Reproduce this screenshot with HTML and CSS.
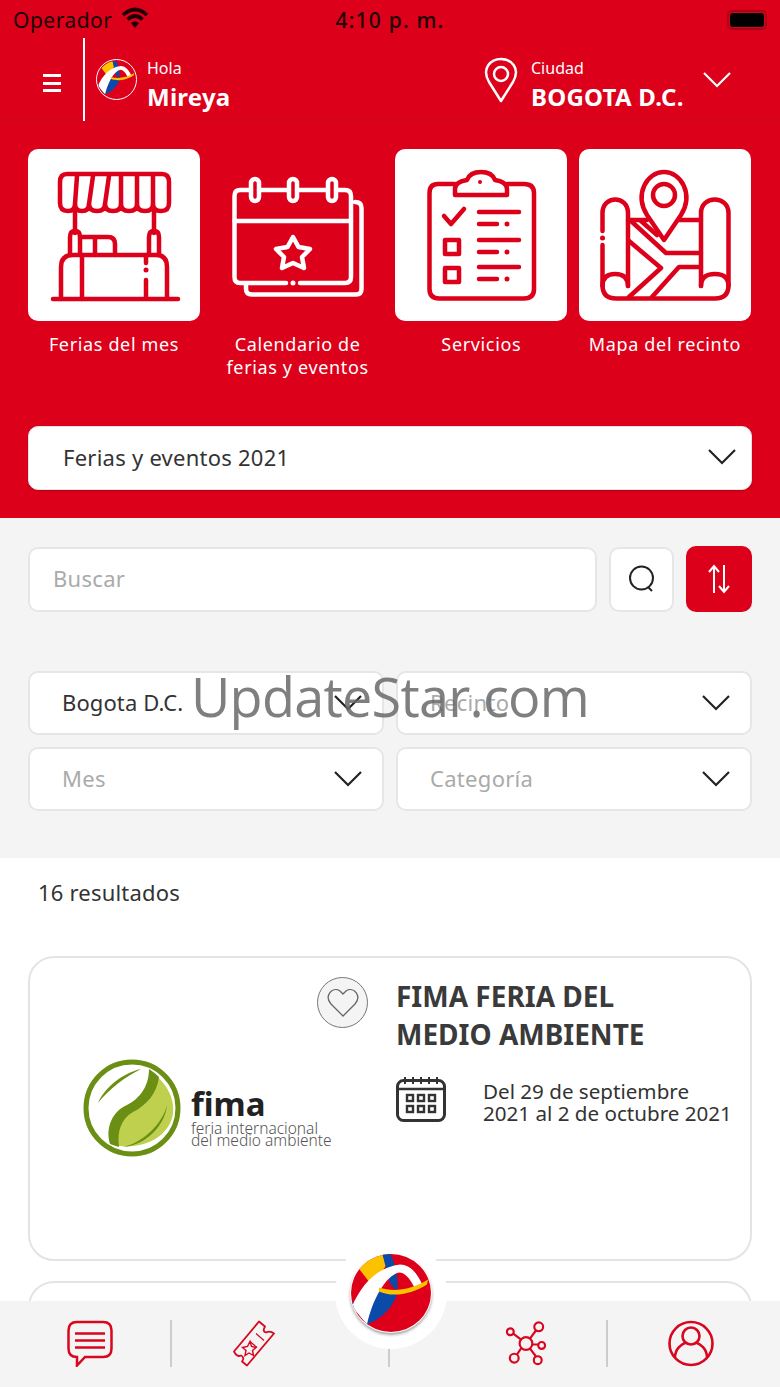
FILE: index.html
```html
<!DOCTYPE html>
<html lang="es">
<head>
    <meta charset="UTF-8">
    <meta name="viewport" content="width=device-width, initial-scale=1.0">
    <title>Ferias y eventos</title>
    <link rel="stylesheet" href="styles.css">
</head>
<body>

<svg class="defs" width="0" height="0">
    <defs>
        <clipPath id="logoClip"><ellipse cx="41" cy="39.500" rx="40" ry="39"/></clipPath>
        <symbol id="logo" viewBox="0 0 82 79">
            <g clip-path="url(#logoClip)">
                <rect width="82" height="79" fill="#de001a"/>
                <path d="M8 14 L32 -2 L36 12 L22 32 Z" fill="#fcc200"/>
                <path d="M32 -1 L40 -1 C45 10 49 25 47 38 L40 30 Z" fill="#0a4aa8"/>
                <path d="M0 50 L30 38 L47 38 C46 50 34 64 17 71 Z" fill="#0a4aa8"/>
                <path d="M2 53 C11 32 26 14 50 11 C60 11 68 20 73 33 L65 35 C60 25 55 19 49 19 C35 22 22 48 17 71 Z" fill="#fff"/>
                <path d="M29 34 C44 39 62 36 78 26 L77 31 C62 41 42 44 29 38 Z" fill="#fcc200"/>
            </g>
        </symbol>
    </defs>
</svg>

<div class="content">
    <section class="red-area">
        <div class="status-bar">
            <div class="status-left">
                <span>Operador</span>
                <svg class="wifi" viewBox="0 0 28 22"><path d="M2 8 Q14 -3 26 8 M6.500 12.500 Q14 5.500 21.500 12.500" fill="none" stroke="#1c0104" stroke-width="3.600"/><path d="M10 16 Q14 12.500 18 16 L14 21 Z" fill="#1c0104"/></svg>
            </div>
            <span class="status-time">4:10 p. m.</span>
            <div class="battery"><div class="battery-fill"></div></div>
        </div>

        <header class="top-bar">
            <div class="burger"><i></i><i></i><i></i></div>
            <div class="user-box">
                <svg class="user-logo"><use href="#logo"/></svg>
                <div class="user-text">
                    <span class="small-label">Hola</span>
                    <strong>Mireya</strong>
                </div>
            </div>
            <div class="city-box">
                <svg class="city-pin" viewBox="0 0 36 46"><path d="M18 44 L6 25 C-2 11 8 2 18 2 C28 2 38 11 30 25 Z" fill="none" stroke="#fff" stroke-width="2.500" stroke-linejoin="round"/><circle cx="18" cy="17" r="7" fill="none" stroke="#fff" stroke-width="2.500"/></svg>
                <div class="user-text">
                    <span class="small-label">Ciudad</span>
                    <strong>BOGOTA D.C.</strong>
                </div>
                <svg class="city-chevron" viewBox="0 0 28 16"><path d="M1 1 L14 14 L27 1" fill="none" stroke="#fff" stroke-width="2.200"/></svg>
            </div>
        </header>

        <div class="tiles">
            <div class="tile">
                <div class="tile-box white">
                    <svg viewBox="0 0 172 172" class="line-red">
                        <path d="M39 25 H134 Q141 25 141 33 V54 Q141 62 133 62 Q125 62 125 55 Q125 62 117 62 Q109 62 109 55 Q109 62 101 62 Q93 62 93 55 Q93 62 85 62 Q77 62 77 55 Q77 62 69 62 Q61 62 61 55 Q61 62 54 62 Q47 62 47 55 Q47 62 40 62 Q32 62 32 54 V33 Q32 25 39 25 Z"/>
                        <path d="M49 27 L47 55 M65 27 L61 55 M81 27 L77 55 M93 27 V55 M109 27 V55 M125 27 L125 55"/>
                        <path d="M47 62 V84 M126 62 V84"/>
                        <path d="M42 106 V88 Q42 82 47 82 Q52 82 52 88 V106 M121 106 V88 Q121 82 126 82 Q131 82 131 88 V106"/>
                        <path d="M52 88 H80 Q87 88 87 95 V106 M67 90 V106"/>
                        <path d="M33 150 V118 Q33 106 45 106 H128 Q139 106 139 118 V150"/>
                        <path d="M54 106 V150 M118 106 V114 M118 131 V148"/>
                        <circle cx="118" cy="121" r="2.500" class="dot"/>
                        <path d="M25 150 H150"/>
                    </svg>
                </div>
                <span class="tile-label">Ferias del mes</span>
            </div>
            <div class="tile">
                <div class="tile-box">
                    <svg viewBox="0 0 172 172" class="line-white">
                        <path d="M34 135 V140 Q34 145.500 40 145.500 H144 Q149.500 145.500 149.500 140 V59 Q149.500 53 143 53"/>
                        <path d="M39 41 H28 Q22.500 41 22.500 47 V128 Q22.500 134 28 134 H74 M88 134 H133 Q139 134 139 128 V47 Q139 41 133 41 H124 M116 41 H85 M77 41 H47"/>
                        <path d="M22.500 72 H139"/>
                        <rect x="39" y="30" width="8" height="22" rx="4"/>
                        <rect x="77" y="30" width="8" height="22" rx="4"/>
                        <rect x="116" y="30" width="8" height="22" rx="4"/>
                        <path d="M81 88 L86.500 98 L98 100 L90 108 L92 119 L81 114 L70 119 L72 108 L64 100 L75.500 98 Z"/>
                        <circle cx="81" cy="134" r="2.500" class="dot"/>
                    </svg>
                </div>
                <span class="tile-label">Calendario de<br>ferias y eventos</span>
            </div>
            <div class="tile">
                <div class="tile-box white">
                    <svg viewBox="0 0 172 172" class="line-red">
                        <path d="M60 35 H43 Q34.500 35 34.500 44 V140 Q34.500 149.500 44 149.500 H129 Q139 149.500 139 140 V44 Q139 35 129 35 H112"/>
                        <path d="M60 46 H112 V40 Q112 33 100 31 Q97 23 86 23 Q75 23 72 31 Q60 33 60 40 Z"/>
                        <circle cx="85" cy="33" r="2" class="dot"/>
                        <path d="M49 67 L56 75 L69 60"/>
                        <path d="M84 63 H124 M84 75 H102 M84 91 H124 M84 103 H102 M84 118 H124 M84 130 H102"/>
                        <circle cx="112" cy="75" r="2.500" class="dot"/>
                        <circle cx="112" cy="103" r="2.500" class="dot"/>
                        <circle cx="112" cy="130" r="2.500" class="dot"/>
                        <rect x="50" y="91" width="14" height="14"/>
                        <rect x="50" y="119" width="14" height="14"/>
                    </svg>
                </div>
                <span class="tile-label">Servicios</span>
            </div>
            <div class="tile">
                <div class="tile-box white">
                    <svg viewBox="0 0 172 172" class="line-red">
                        <path d="M23.500 82 V64 C23.500 46 49 46 49 64 V137 M23.500 96 V136 Q23.500 149.500 37 149.500 H136 Q149.500 149.500 149.500 136 V64 C149.500 46 122 46 122 64 V137"/>
                        <circle cx="23.500" cy="89" r="2.500" class="dot"/>
                        <path d="M49 137 Q49 125 36 125 Q23.500 125 23.500 137 M122 137 Q122 125 136 125 Q149.500 125 149.500 137"/>
                        <path d="M49 71 H68 M100 71 H122"/>
                        <path d="M52 72 L87 104 H122 M62 72 L78 86 M50 92 L82 119 L50 148 M73 148 L100 118 H122"/>
                        <path class="mask" d="M85 91 L68 66 C55 45 68 23 85 23 C102 23 115 45 102 66 Z"/>
                        <circle cx="85" cy="46" r="11"/>
                    </svg>
                </div>
                <span class="tile-label">Mapa del recinto</span>
            </div>
        </div>

        <div class="year-select">
            <span>Ferias y eventos 2021</span>
            <svg class="chevron" viewBox="0 0 28 16"><path d="M1 1 L14 14 L27 1"/></svg>
        </div>
    </section>

    <section class="filters">
        <div class="search-row">
            <div class="field search-input"><span class="placeholder">Buscar</span></div>
            <div class="field search-btn">
                <svg viewBox="0 0 28 28"><circle cx="13.500" cy="13" r="11.500" fill="none" stroke="#222" stroke-width="2"/><path d="M20 22 L24 26" stroke="#222" stroke-width="2"/></svg>
            </div>
            <div class="sort-btn">
                <svg viewBox="0 0 24 30"><path d="M7 29 V2 M2 8 L7 2 L12 8 M17 1 V28 M12 22 L17 28 L22 22" fill="none" stroke="#fff" stroke-width="2"/></svg>
            </div>
        </div>
        <div class="filter-grid">
            <div class="field select"><span class="value">Bogota D.C.</span><svg class="chevron" viewBox="0 0 28 16"><path d="M1 1 L14 14 L27 1"/></svg></div>
            <div class="field select"><span class="placeholder">Recinto</span><svg class="chevron" viewBox="0 0 28 16"><path d="M1 1 L14 14 L27 1"/></svg></div>
            <div class="field select"><span class="placeholder">Mes</span><svg class="chevron" viewBox="0 0 28 16"><path d="M1 1 L14 14 L27 1"/></svg></div>
            <div class="field select"><span class="placeholder">Categoría</span><svg class="chevron" viewBox="0 0 28 16"><path d="M1 1 L14 14 L27 1"/></svg></div>
        </div>
    </section>

    <section class="results">
        <p class="results-count">16 resultados</p>
        <article class="card">
            <div class="card-media">
                <div class="fav">
                    <svg viewBox="0 0 32 30"><path d="M16 28 L4 16 C-3 8 5 -2 13 3 L16 6 L19 3 C27 -2 35 8 28 16 Z" fill="none" stroke="#666" stroke-width="1.300"/></svg>
                </div>
                <div class="fima">
                    <svg class="fima-mark" viewBox="0 0 98 98">
                        <circle cx="49" cy="49" r="46" fill="#fff" stroke="#6a8f14" stroke-width="5"/>
                        <path d="M68 13 C82 22 92 38 90 55 C86 78 60 92 30 86 C26 70 32 58 46 50 C58 44 68 30 68 13 Z" fill="#bfcf4e"/>
                        <path d="M66 10 C72 14 74 16 76 18 C74 34 64 46 50 53 C38 60 34 72 36 88 L27 85 C22 68 30 52 44 46 C56 40 66 28 66 10 Z" fill="#6a8f14"/>
                        <path d="M15 44 C22 28 40 14 58 10 C42 18 26 30 15 44 Z" fill="#6a8f14"/>
                        <path d="M40 88 C60 84 80 64 84 46 C82 66 64 86 40 88 Z" fill="#6a8f14"/>
                    </svg>
                    <div class="fima-text">
                        <strong>fima</strong>
                        <span>feria internacional</span>
                        <span>del medio ambiente</span>
                    </div>
                </div>
            </div>
            <div class="card-body">
                <h2>FIMA FERIA DEL MEDIO AMBIENTE</h2>
                <div class="card-date">
                    <svg viewBox="0 0 50 46">
                        <rect x="1.500" y="4.500" width="47" height="40" rx="6" fill="none" stroke="#333" stroke-width="3"/>
                        <path d="M2 13 H48" stroke="#333" stroke-width="2.500"/>
                        <path d="M9 1 V8 M17 1 V8 M25 1 V8 M33 1 V8 M41 1 V8" stroke="#333" stroke-width="2"/>
                        <g fill="none" stroke="#333" stroke-width="2.400">
                            <rect x="11" y="19" width="6" height="6"/><rect x="22" y="19" width="6" height="6"/><rect x="33" y="19" width="6" height="6"/>
                            <rect x="11" y="30" width="6" height="6"/><rect x="22" y="30" width="6" height="6"/><rect x="33" y="30" width="6" height="6"/>
                        </g>
                    </svg>
                    <p>Del 29 de septiembre<br>2021 al 2 de octubre 2021</p>
                </div>
            </div>
        </article>
        <article class="card"></article>
    </section>
</div>

<nav class="bottom-nav">
    <div class="nav-cell cell-a">
        <svg class="nav-icon chat" viewBox="0 0 46 46"><path d="M10 1.500 H36 Q44.500 1.500 44.500 10 V28 Q44.500 36.500 36 36.500 H18 L10 45 V36.500 Q1.500 36.500 1.500 28 V10 Q1.500 1.500 10 1.500 Z" fill="none" stroke="#d8061f" stroke-width="2.500"/><path d="M8 13 H38 M8 20 H38 M8 27 H38" stroke="#d8061f" stroke-width="2.600"/></svg>
    </div>
    <div class="nav-cell cell-b">
        <svg class="nav-icon ticket" viewBox="0 0 42 46"><path d="M26 1 L32 6 Q29 11 33 12 Q37 10 41 13 L14 45 L9 41 Q12 37 8 35 Q4 37 1 31 Z" fill="none" stroke="#d8061f" stroke-width="1.800" stroke-linejoin="round"/><path d="M17 21 L24 27 M23 13 L31 20" stroke="#d8061f" stroke-width="1.200"/><path d="M17 21 L18.500 26 L23 27 L19.500 30 L20.500 35 L16 32.500 L12 35 L13 30 L9.500 27 L14.500 26 Z" fill="none" stroke="#d8061f" stroke-width="1.400"/></svg>
    </div>
    <div class="nav-cell cell-c">
        <svg class="nav-icon network" viewBox="0 0 44 48" fill="none" stroke="#d8061f" stroke-width="2.200"><circle cx="23" cy="24" r="6.500"/><circle cx="36" cy="7" r="4.500"/><circle cx="7" cy="12" r="3.500"/><circle cx="39" cy="26" r="3.500"/><circle cx="11" cy="39" r="4.500"/><circle cx="35" cy="41" r="4"/><path d="M27 19 L33 11 M18 20 L10 14 M29.500 25 H35.500 M18 29 L14 35 M27 29 L33 37"/></svg>
    </div>
    <div class="nav-cell cell-d">
        <svg class="nav-icon person" viewBox="0 0 46 46" fill="none" stroke="#d8061f" stroke-width="2.600"><circle cx="23" cy="23" r="21.500"/><circle cx="23" cy="15.500" r="8.500"/><path d="M7 37 C7 28 14 23.500 18 22 M39 37 C39 28 32 23.500 28 22"/></svg>
    </div>
</nav>

<div class="fab"><svg class="fab-logo"><use href="#logo"/></svg></div>
<div class="watermark">UpdateStar.com</div>

</body>
</html>
```

FILE: styles.css
```css
* { box-sizing: border-box; }
html, body { height: 100%; }
body {
    margin: 0;
    font-family: "Noto Sans", "Open Sans", sans-serif;
    color: #333;
    background: #fff;
    overflow: hidden;
    display: flex;
    flex-direction: column;
    position: relative;
}
.defs { position: absolute; }
.content { flex: 1; overflow: hidden; min-height: 0; }

/* red top part */
.red-area {
    background: #dd001a;
    height: 518px;
    padding-bottom: 28px;
}
.status-bar {
    height: 38px;
    padding: 2px 13px 0 13px;
    display: grid;
    grid-template-columns: 1fr auto 1fr;
    align-items: center;
    color: #1c0104;
    font-size: 21px;
    letter-spacing: 0.5px;
}
.status-left { display: flex; align-items: center; gap: 8px; }
.wifi { width: 28px; height: 22px; margin-bottom: 5px; }
.status-time { letter-spacing: 1.2px; font-weight: 500; }
.battery {
    justify-self: end;
    width: 40px;
    height: 20px;
    border: 2px solid #a80617;
    border-radius: 5px;
    padding: 1px;
}
.battery-fill { height: 100%; background: #000; border-radius: 3px; }

.top-bar {
    height: 84px;
    display: flex;
    align-items: stretch;
    border-bottom: 1px solid #c40a1d;
    color: #fff;
}
.burger {
    width: 85px;
    padding: 36px 22px 0 43px;
    border-right: 2px solid #fff;
    display: flex;
    flex-direction: column;
    gap: 4.500px;
}
.burger i { display: block; height: 3px; background: #fff; }
.user-box {
    width: 387px;
    display: flex;
    align-items: flex-start;
    gap: 10px;
    padding: 21px 0 0 11px;
}
.user-logo {
    width: 41px;
    height: 41px;
    border-radius: 50%;
    border: 1.500px solid #fff;
    flex: none;
}
.user-text { display: flex; flex-direction: column; margin-top: -2px; }
.small-label { font-size: 16px; line-height: 22px; }
.user-text strong { font-size: 24px; line-height: 36px; font-weight: 700; letter-spacing: 0.25px; }
.city-box { display: flex; align-items: flex-start; padding: 19px 0 0 11px; }
.city-pin { width: 36px; height: 46px; margin-right: 12px; }
.city-box .user-text { margin-top: 0; }
.city-chevron { width: 28px; height: 16px; margin: 15px 0 0 19px; }

.tiles {
    display: grid;
    grid-template-columns: repeat(4, 172px);
    column-gap: 11.670px;
    padding: 27px 28px 0;
}
.tile { display: flex; flex-direction: column; align-items: center; height: 277px; }
.tile-box { width: 172px; height: 172px; border-radius: 10px; }
.tile-box.white { background: #fff; }
.tile-box svg { display: block; width: 172px; height: 172px; }
.tile-label {
    margin-top: 12px;
    color: #fff;
    font-size: 18px;
    line-height: 23px;
    letter-spacing: 0.65px;
    text-align: center;
    white-space: nowrap;
}
.line-red, .line-white { fill: none; stroke-width: 4.500; stroke-linecap: round; stroke-linejoin: round; }
.line-red { stroke: #dd001a; }
.line-white { stroke: #fff; }
.line-red .dot { fill: #dd001a; stroke: none; }
.line-white .dot { fill: #fff; stroke: none; }
.line-red .mask { fill: #fff; }

.year-select {
    margin: 0 28px;
    height: 64px;
    background: #fff;
    border: 1px solid #e3e3e3;
    border-radius: 10px;
    box-shadow: 0 1px 2px rgba(0, 0, 0, 0.2);
    display: flex;
    align-items: center;
    justify-content: space-between;
    padding: 0 15px 2px 34px;
    font-size: 22px;
    letter-spacing: 0.25px;
    color: #333;
}
.chevron { width: 28px; height: 16px; flex: none; fill: none; stroke: #222; stroke-width: 2.200; }

/* filters */
.filters {
    background: #f4f4f4;
    height: 340px;
    padding: 28px 28px 0 28px;
}
.field {
    background: #fff;
    border: 2px solid #e6e6e6;
    border-radius: 10px;
}
.search-row { display: flex; align-items: center; gap: 12px; }
.search-input {
    width: 569px;
    height: 65px;
    display: flex;
    align-items: center;
    padding: 0 0 2px 23px;
}
.search-btn {
    width: 65px;
    height: 65px;
    display: flex;
    align-items: center;
    justify-content: center;
}
.search-btn svg { width: 28px; height: 28px; }
.sort-btn {
    width: 66px;
    height: 66px;
    background: #dd001a;
    border-radius: 10px;
    display: flex;
    align-items: center;
    justify-content: center;
}
.sort-btn svg { width: 24px; height: 30px; }
.placeholder { color: #aaa; font-size: 22px; letter-spacing: 0.3px; }
.value { color: #333; font-size: 22px; letter-spacing: 0.1px; }
.filter-grid {
    display: grid;
    grid-template-columns: 356px 356px;
    column-gap: 12px;
    row-gap: 12px;
    margin-top: 59px;
}
.select {
    height: 64px;
    display: flex;
    align-items: center;
    justify-content: space-between;
    padding: 0 20px 2px 32px;
}
.select .chevron { margin-top: 1px; }

/* results */
.results { padding: 0 28px; }
.results-count {
    margin: 0;
    padding: 19px 0 0 10px;
    height: 99px;
    font-size: 22px;
    line-height: 30px;
    letter-spacing: 0.2px;
}
.card {
    width: 724px;
    height: 305px;
    margin-bottom: 20px;
    border: 2px solid #e4e4e4;
    border-radius: 26px;
    display: flex;
    background: #fff;
}
.results-count + .card { margin-top: -1px; }
.card-media { width: 366px; position: relative; }
.fav {
    position: absolute;
    top: 19px;
    left: 287px;
    width: 51px;
    height: 51px;
    border: 1px solid #777;
    border-radius: 50%;
    background: #f4f4f4;
    display: flex;
    align-items: center;
    justify-content: center;
}
.fav svg { width: 32px; height: 30px; }
.fima { display: flex; align-items: center; gap: 10px; padding: 101px 0 0 53px; }
.fima-mark { width: 98px; height: 98px; flex: none; }
.fima-text { display: flex; flex-direction: column; margin-top: 16px; }
.fima-text strong {
    font-size: 33px;
    line-height: 36px;
    color: #222;
    font-weight: 700;
}
.fima-text span {
    font-size: 15.500px;
    font-weight: 300;
    line-height: 12px;
    color: #555;
    white-space: nowrap;
}
.card-body { flex: 1; padding: 19px 16px 0 0; }
.card-body h2 {
    margin: 0;
    font-size: 28px;
    line-height: 38px;
    font-weight: 700;
    color: #3a3a3a;
    width: 310px;
}
.card-date { display: flex; gap: 37px; margin-top: 23px; }
.card-date svg { width: 50px; height: 46px; flex: none; }
.card-date p {
    margin: 4px 0 0;
    font-size: 20.600px;
    line-height: 22px;
    color: #333;
    white-space: nowrap;
}

/* bottom navigation */
.bottom-nav {
    height: 86px;
    flex: none;
    background: #f4f4f4;
    display: flex;
    padding-top: 19px;
}
.nav-cell { height: 47px; border-right: 2px solid #ccc; }
.cell-a { width: 172px; padding-left: 67px; }
.cell-b { width: 218px; padding-left: 61px; }
.cell-c { width: 218px; padding-left: 113px; }
.cell-d { flex: 1; border-right: none; padding-left: 60px; }
.nav-icon { display: block; height: 47px; }
.chat { width: 46px; }
.ticket { width: 42px; }
.network { width: 44px; }
.person { width: 46px; }

/* things lying over the page */
.fab {
    position: absolute;
    left: 335px;
    top: 1237px;
    width: 112px;
    height: 112px;
    border-radius: 50%;
    background: #fff;
    display: flex;
    align-items: center;
    justify-content: center;
}
.fab-logo {
    width: 82px;
    height: 80px;
    border-radius: 50%;
    box-shadow: 0 2px 3px rgba(0, 0, 0, 0.35);
}
.watermark {
    position: absolute;
    left: 191px;
    top: 659px;
    font-family: "Open Sans", sans-serif;
    font-size: 54px;
    line-height: 74px;
    letter-spacing: -0.75px;
    color: rgba(105, 105, 105, 0.85);
    white-space: nowrap;
}
```
